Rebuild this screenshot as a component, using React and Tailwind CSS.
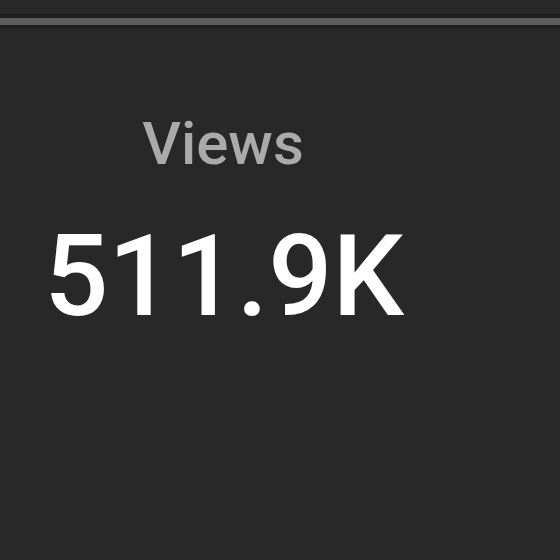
export default function App() {
  return (
    <div className="w-[560px] h-[560px] bg-[#282828] overflow-hidden" style={{ fontFamily: "Roboto, 'Noto Sans', sans-serif" }}>
      {/* ===== TOP DIVIDER ===== */}
      <div className="pt-[14px]">
        <div className="h-[4px] bg-[#1f1f1f]" />
        <div className="h-[7px] bg-[#5c5c5c]" />
        <div className="h-[3px] bg-[#1f1f1f]" />
      </div>

      {/* ===== METRIC ===== */}
      <div className="w-[448px] flex flex-col items-center pt-[86px]">
        <div className="text-[#aaaaaa] text-[60px] leading-[60px] font-medium mr-[2px]">Views</div>
        <div className="text-white text-[113px] leading-[113px] font-medium mt-[46px]">
          511.9K
        </div>
      </div>
    </div>
  );
}
